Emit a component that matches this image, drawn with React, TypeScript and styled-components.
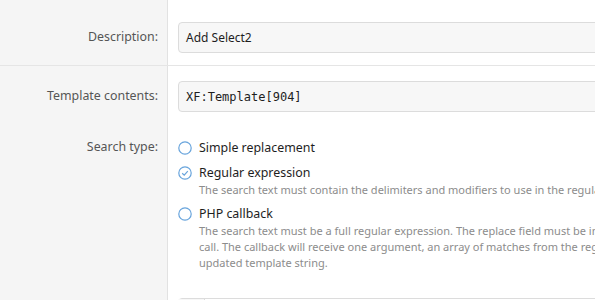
import React from 'react';
import styled, { createGlobalStyle } from 'styled-components';

const GlobalStyle = createGlobalStyle`
    html, body {
        margin: 0;
        padding: 0;
        background: #fff;
        overflow: hidden;
    }
    body {
        font-family: 'Noto Sans', 'Open Sans', sans-serif;
        font-size: 12.4px;
        color: #141414;
    }
`;

const Form = styled.div`
    width: 900px;
`;

const Row = styled.div<{ $top: number; $bottom: number; $sep?: boolean }>`
    display: grid;
    grid-template-columns: 168px 1fr;
    border-bottom: ${(p) => (p.$sep ? '1px solid #e5e5e5' : 'none')};
    > * {
        padding-top: ${(p) => p.$top}px;
        padding-bottom: ${(p) => p.$bottom}px;
    }
`;

const Label = styled.div<{ $offset: number }>`
    background: #f5f5f5;
    border-right: 1px solid #e2e2e2;
    text-align: right;
    padding-right: 9px;
    color: #555;
    line-height: 18px;
    > span {
        display: block;
        margin-top: ${(p) => p.$offset}px;
    }
`;

const Field = styled.div`
    padding-left: 10px;
`;

const Input = styled.div<{ $mono?: boolean }>`
    box-sizing: border-box;
    height: 31px;
    width: 700px;
    display: flex;
    align-items: center;
    padding: 0 7px;
    background: #f7f7f7;
    border: 1px solid #dcdcdc;
    border-radius: 4px;
    font-family: ${(p) => (p.$mono ? "'DejaVu Sans Mono', 'Liberation Mono', monospace" : 'inherit')};
    font-size: 12px;
    color: #1e1e1e;
`;

const RadioList = styled.div`
    display: flex;
    flex-direction: column;
    gap: 6px;
`;

const RadioItem = styled.div`
    display: grid;
    grid-template-columns: 15px 1fr;
    column-gap: 6px;
    align-items: start;
`;

const RadioText = styled.div`
    line-height: 19px;
    color: #1e1e1e;
`;

const Hint = styled.div`
    grid-column: 2;
    font-size: 11px;
    line-height: 16px;
    color: #8c8c8c;
`;

const IconBox = styled.span`
    display: flex;
    align-items: center;
    height: 19px;
`;

const CodeBox = styled.div`
    box-sizing: border-box;
    width: 700px;
    height: 60px;
    border: 1px solid #dcdcdc;
    border-radius: 4px;
    display: grid;
    grid-template-columns: 26px 1fr;
    > div:first-child {
        border-right: 1px solid #dcdcdc;
        background: #f7f7f7;
    }
`;

function RadioIcon({ checked }: { checked?: boolean }) {
    return (
        <IconBox>
            <svg width="14" height="14" viewBox="0 0 14 14">
                <circle cx="7" cy="7" r="6.2" fill="none" stroke="#68a4dc" strokeWidth="1.2" />
                {checked && (
                    <path d="M4.2 7.2 L6.2 9.1 L9.8 5.2" fill="none" stroke="#68a4dc" strokeWidth="1.2" />
                )}
            </svg>
        </IconBox>
    );
}

const options = [
    { label: 'Simple replacement' },
    {
        label: 'Regular expression',
        checked: true,
        hint: 'The search text must contain the delimiters and modifiers to use in the regular expression, such as /pattern/i.',
    },
    {
        label: 'PHP callback',
        hint: (
            <>
                The search text must be a full regular expression. The replace field must be in the format Class::method for the
                <br />
                call. The callback will receive one argument, an array of matches from the regular expression, and must return the
                <br />
                updated template string.
            </>
        ),
    },
];

export default function App() {
    return (
        <>
            <GlobalStyle />
            <Form>
                <Row $top={22} $bottom={12} $sep>
                    <Label $offset={6}>
                        <span>Description:</span>
                    </Label>
                    <Field>
                        <Input>Add Select2</Input>
                    </Field>
                </Row>
                <Row $top={15} $bottom={14}>
                    <Label $offset={6}>
                        <span>Template contents:</span>
                    </Label>
                    <Field>
                        <Input $mono>XF:Template[904]</Input>
                    </Field>
                </Row>
                <Row $top={12} $bottom={27}>
                    <Label $offset={0}>
                        <span>Search type:</span>
                    </Label>
                    <Field>
                        <RadioList>
                            {options.map((o, i) => (
                                <RadioItem key={i}>
                                    <RadioIcon checked={o.checked} />
                                    <RadioText>{o.label}</RadioText>
                                    {o.hint && <Hint>{o.hint}</Hint>}
                                </RadioItem>
                            ))}
                        </RadioList>
                    </Field>
                </Row>
                <Row $top={0} $bottom={20}>
                    <Label $offset={8}>
                        <span>Find:</span>
                    </Label>
                    <Field>
                        <CodeBox>
                            <div />
                            <div />
                        </CodeBox>
                    </Field>
                </Row>
            </Form>
        </>
    );
}
